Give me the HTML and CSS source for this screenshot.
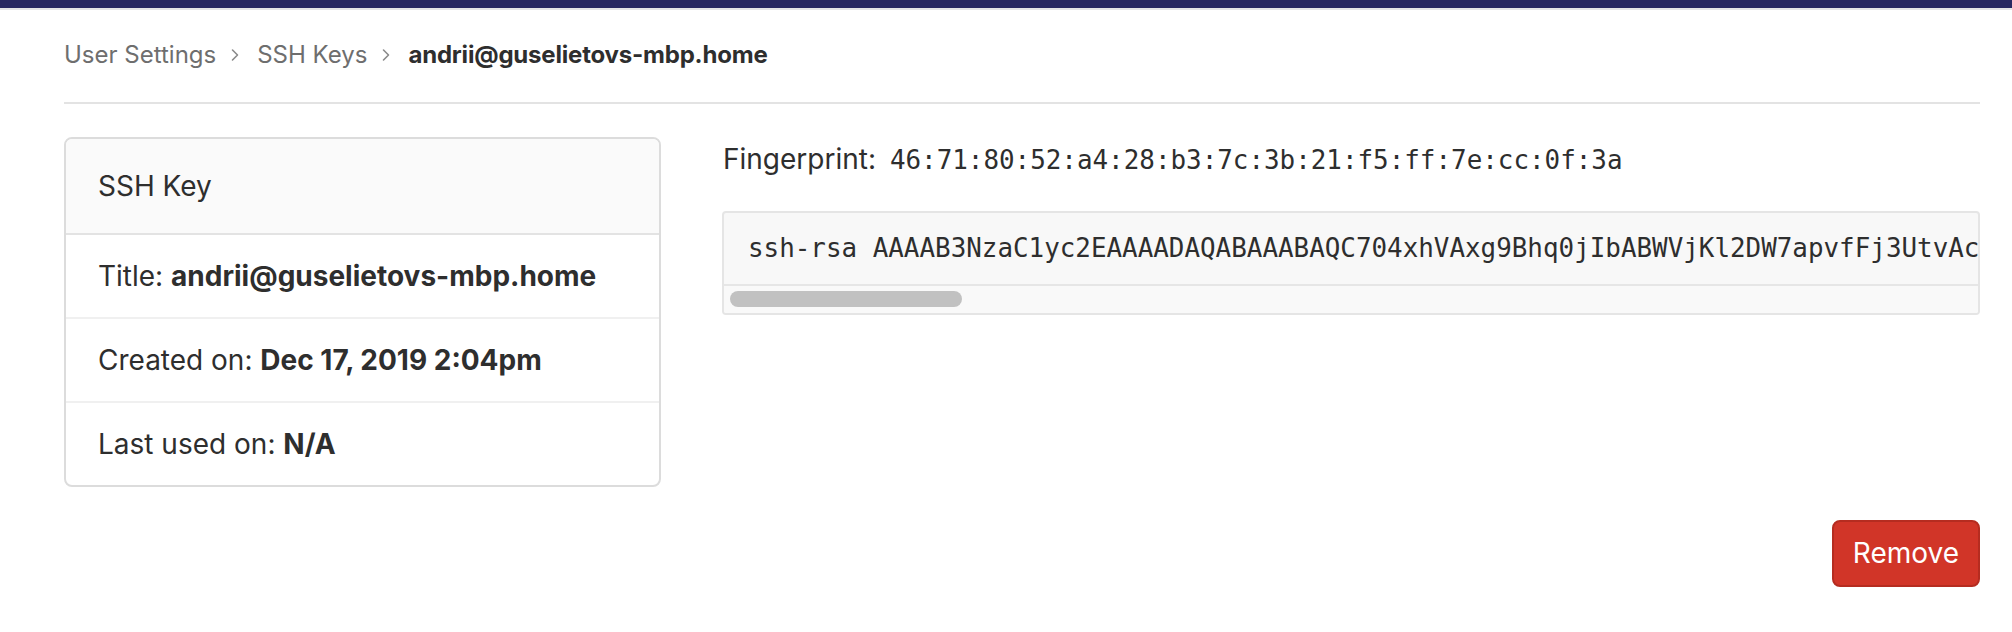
FILE: index.html
```html
<!DOCTYPE html>
<html lang="en">
<head>
<meta charset="utf-8">
<title>SSH Key · User Settings</title>
<link rel="stylesheet" href="styles.css">
</head>
<body>
<header class="topbar"></header>
<main class="page">
  <nav class="breadcrumbs">
    <a class="crumb" href="#">User Settings</a>
    <svg class="chevron" viewBox="0 0 16 16" aria-hidden="true"><path d="M5.5 3 L10.5 8 L5.5 13" fill="none" stroke="currentColor" stroke-width="1.6" stroke-linecap="round" stroke-linejoin="round"/></svg>
    <a class="crumb" href="#">SSH Keys</a>
    <svg class="chevron" viewBox="0 0 16 16" aria-hidden="true"><path d="M5.5 3 L10.5 8 L5.5 13" fill="none" stroke="currentColor" stroke-width="1.6" stroke-linecap="round" stroke-linejoin="round"/></svg>
    <span class="crumb current">andrii@guselietovs-mbp.home</span>
  </nav>

  <section class="content">
    <div class="card">
      <div class="card-header">SSH Key</div>
      <ul class="card-list">
        <li>Title: <strong>andrii@guselietovs-mbp.home</strong></li>
        <li>Created on: <strong>Dec 17, 2019 2:04pm</strong></li>
        <li>Last used on: <strong>N/A</strong></li>
      </ul>
    </div>

    <div class="key-details">
      <p class="fingerprint">Fingerprint: <code>46:71:80:52:a4:28:b3:7c:3b:21:f5:ff:7e:cc:0f:3a</code></p>
      <div class="key-box">
        <pre class="key-text">ssh-rsa AAAAB3NzaC1yc2EAAAADAQABAAABAQC704xhVAxg9Bhq0jIbABWVjKl2DW7apvfFj3UtvAcQ8m2Xk9pLrT0sBvYh4fJ1nWqZ6eGdKuR3yHc7VtP5aLxM0oE2iSjNbF8wQzD1gUkI3rCvT9pOe4sXhY7mA6lB2nKfZ0tJqW5dRuG8cVyH1oP3iLxE9sNaT4bM7kQ2jF6vU0wZr5gYeC8hDlX3tPn1sIuA9oBq7fKmW4zJ2cRvE6xN0yGaT5dLpH8bQiS3uV1kO7wM9eYr2fCjZ4nX6tA0gLsD5hP8mKqB3vI1oU7yW9cE2xR4aF6jN0zT8dG5sH1lY3pQ7kV9bM2iJ4uOfC6nXw andrii@guselietovs-mbp.home</pre>
        <div class="scroll-track"><div class="scroll-thumb"></div></div>
      </div>
    </div>
  </section>

  <div class="actions">
    <button class="btn-remove" type="button">Remove</button>
  </div>
</main>
</body>
</html>
```

FILE: styles.css
```css
* {
  box-sizing: border-box;
}

html, body {
  margin: 0;
  padding: 0;
  background: #ffffff;
}

body {
  font-family: Inter, "Noto Sans", "Liberation Sans", sans-serif;
  color: #2e2e2e;
  font-size: 28px;
  line-height: 40px;
}

.topbar {
  height: 10px;
  background: #292961;
  border-bottom: 2px solid #e6e6e6;
}

.page {
  padding: 0 32px 0 64px;
}

.breadcrumbs {
  display: flex;
  align-items: center;
  height: 94px;
  padding-bottom: 2px;
  border-bottom: 2px solid #e3e3e3;
  font-size: 24px;
  line-height: 32px;
}

.crumb {
  color: #6e6e6e;
  text-decoration: none;
}

.crumb.current {
  color: #2e2e2e;
  font-weight: 700;
  letter-spacing: -0.2px;
}

.chevron {
  width: 16px;
  height: 16px;
  color: #8a8a8a;
  margin: 0 14px 0 11px;
  flex: none;
}

.content {
  display: grid;
  grid-template-columns: 597px 1fr;
  column-gap: 61px;
  margin-top: 33px;
  align-items: start;
}

.card {
  border: 2px solid #dcdcdc;
  border-radius: 8px;
  overflow: hidden;
  background: #fff;
}

.card-header {
  background: #fafafa;
  border-bottom: 2px solid #e3e3e3;
  padding: 27px 32px;
}

.card-list {
  list-style: none;
  margin: 0;
  padding: 0;
}

.card-list li {
  padding: 21px 32px;
}

.card-list li + li {
  border-top: 2px solid #f0f0f0;
}

.card-list strong {
  font-weight: 700;
}

.key-details {
  min-width: 0;
}

.fingerprint {
  margin: 0 0 31px;
  padding: 2px 0 0 1px;
}

.fingerprint code {
  font-family: "DejaVu Sans Mono", "Liberation Mono", monospace;
  font-size: 25.9px;
  margin-left: 6px;
}

.key-box {
  border: 2px solid #e5e5e5;
  border-radius: 4px;
  background: #f8f8f8;
  overflow: hidden;
}

.key-text {
  margin: 0;
  padding: 16px 24px;
  font-family: "DejaVu Sans Mono", "Liberation Mono", monospace;
  font-size: 25.9px;
  line-height: 39px;
  color: #2e2e2e;
  white-space: pre;
  overflow: hidden;
}

.scroll-track {
  border-top: 2px solid #e6e6e6;
  background: #f9f9f9;
  height: 29px;
  padding: 5px 6px 0;
}

.scroll-thumb {
  width: 232px;
  height: 16px;
  border-radius: 8px;
  background: #c1c1c1;
}

.actions {
  display: flex;
  justify-content: flex-end;
  margin-top: 33px;
}

.btn-remove {
  font-family: Inter, "Noto Sans", "Liberation Sans", sans-serif;
  font-size: 28px;
  line-height: 39px;
  color: #ffffff;
  background: #d13528;
  border: 2px solid #b52c20;
  border-radius: 8px;
  padding: 12px 19px;
  cursor: pointer;
}
```
